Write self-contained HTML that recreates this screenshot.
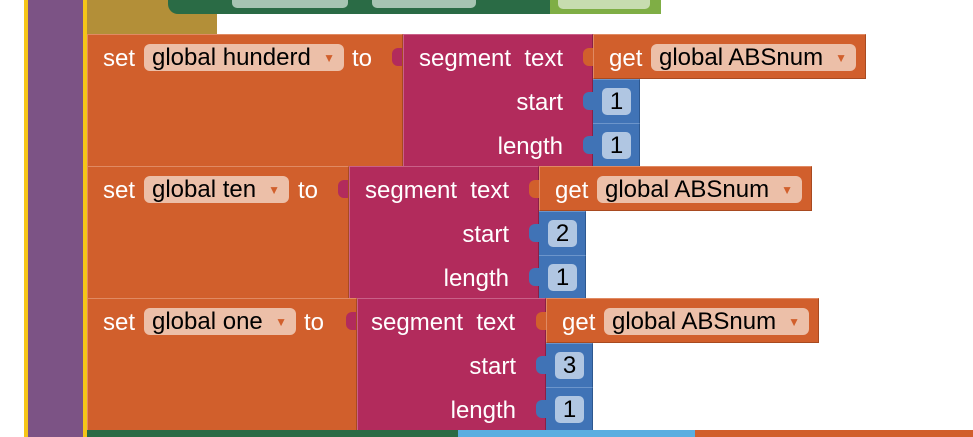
<!DOCTYPE html><html><head><style>
body{margin:0;width:973px;height:437px;overflow:hidden;background:#fff;position:relative;font-family:"Liberation Sans",Arial,sans-serif;font-size:24px}
div{position:absolute;box-sizing:border-box}
.o{background:#d15f2c;border-top:1px solid #e08a63;border-left:1px solid #e08a63;border-bottom:1px solid #a84a20;border-right:1px solid #a84a20}
.m{background:#b22b5c;border-top:1px solid #c96088;border-left:1px solid #c96088;border-right:1px solid #8a2045}
.b{background:#4073b6;border-top:1px solid #6c95cb;border-right:1px solid #2d5890}
.t{color:#fff;white-space:nowrap;line-height:26px}
.r{text-align:right;width:120px}
.p{background:#ecbfa8;border-radius:6px;color:#000;height:27px;line-height:28px;padding-left:8px;white-space:nowrap}
.p span{position:absolute;right:9px;top:0;color:#d15f2c;font-size:12px}
.n{background:#b0c6e2;border-radius:5px;color:#000;width:29px;height:27px;line-height:28px;text-align:center}
.tab{width:10px;height:18px;border-radius:6px 0 0 6px}
</style></head><body>
<div style="left:24px;top:0;width:4px;height:437px;background:#f5c518"></div>
<div style="left:28px;top:0;width:55px;height:437px;background:#7c5385"></div>
<div style="left:83px;top:0;width:4px;height:437px;background:#f5c518"></div>
<div style="left:87px;top:0;width:130px;height:34px;background:#b38f38"></div>
<div style="left:168px;top:0;width:382px;height:14px;background:#2a6b45;border-radius:0 0 0 10px"></div>
<div style="left:232px;top:0;width:116px;height:8px;background:#a6c4b2;border-radius:0 0 5px 5px"></div>
<div style="left:372px;top:0;width:104px;height:8px;background:#a6c4b2;border-radius:0 0 5px 5px"></div>
<div style="left:550px;top:0;width:111px;height:14px;background:#7fae45"></div>
<div style="left:558px;top:0;width:92px;height:9px;background:#c7dcaf;border-radius:0 0 5px 5px"></div>

<!-- block 1 -->
<div class="o" style="left:87px;top:34px;width:316px;height:133px"></div>
<div class="t" style="left:103px;top:46px">set</div>
<div class="p" style="left:144px;top:44px;width:200px">global hunderd<span>▼</span></div>
<div class="t" style="left:352px;top:46px">to</div>
<div class="m" style="left:403px;top:34px;width:190px;height:132px"></div>
<div class="m tab" style="left:392px;top:48px;border:none"></div>
<div class="t" style="left:419px;top:46px">segment&nbsp; text</div>
<div class="t r" style="left:443px;top:90px">start</div>
<div class="t r" style="left:443px;top:134px">length</div>
<div class="o" style="left:593px;top:34px;width:273px;height:45px"></div>
<div class="o tab" style="left:583px;top:48px;border:none"></div>
<div class="t" style="left:609px;top:46px">get</div>
<div class="p" style="left:651px;top:44px;width:205px">global ABSnum<span>▼</span></div>
<div class="b" style="left:593px;top:79px;width:47px;height:44px"></div>
<div class="b tab" style="left:583px;top:92px;border:none"></div>
<div class="n" style="left:602px;top:88px">1</div>
<div class="b" style="left:593px;top:123px;width:47px;height:44px"></div>
<div class="b tab" style="left:583px;top:136px;border:none"></div>
<div class="n" style="left:602px;top:132px">1</div>

<!-- block 2 -->
<div class="o" style="left:87px;top:166px;width:262px;height:133px"></div>
<div class="t" style="left:103px;top:178px">set</div>
<div class="p" style="left:144px;top:176px;width:145px">global ten<span>▼</span></div>
<div class="t" style="left:298px;top:178px">to</div>
<div class="m" style="left:349px;top:166px;width:190px;height:132px"></div>
<div class="m tab" style="left:338px;top:180px;border:none"></div>
<div class="t" style="left:365px;top:178px">segment&nbsp; text</div>
<div class="t r" style="left:389px;top:222px">start</div>
<div class="t r" style="left:389px;top:266px">length</div>
<div class="o" style="left:539px;top:166px;width:273px;height:45px"></div>
<div class="o tab" style="left:529px;top:180px;border:none"></div>
<div class="t" style="left:555px;top:178px">get</div>
<div class="p" style="left:597px;top:176px;width:205px">global ABSnum<span>▼</span></div>
<div class="b" style="left:539px;top:211px;width:47px;height:44px"></div>
<div class="b tab" style="left:529px;top:224px;border:none"></div>
<div class="n" style="left:548px;top:220px">2</div>
<div class="b" style="left:539px;top:255px;width:47px;height:44px"></div>
<div class="b tab" style="left:529px;top:268px;border:none"></div>
<div class="n" style="left:548px;top:264px">1</div>

<!-- block 3 -->
<div class="o" style="left:87px;top:298px;width:270px;height:133px"></div>
<div class="t" style="left:103px;top:310px">set</div>
<div class="p" style="left:144px;top:308px;width:152px">global one<span>▼</span></div>
<div class="t" style="left:304px;top:310px">to</div>
<div class="m" style="left:357px;top:298px;width:189px;height:132px"></div>
<div class="m tab" style="left:346px;top:312px;border:none"></div>
<div class="t" style="left:371px;top:310px">segment&nbsp; text</div>
<div class="t r" style="left:396px;top:354px">start</div>
<div class="t r" style="left:396px;top:398px">length</div>
<div class="o" style="left:546px;top:298px;width:273px;height:45px"></div>
<div class="o tab" style="left:536px;top:312px;border:none"></div>
<div class="t" style="left:562px;top:310px">get</div>
<div class="p" style="left:604px;top:308px;width:205px">global ABSnum<span>▼</span></div>
<div class="b" style="left:546px;top:343px;width:47px;height:44px"></div>
<div class="b tab" style="left:536px;top:356px;border:none"></div>
<div class="n" style="left:555px;top:352px">3</div>
<div class="b" style="left:546px;top:387px;width:47px;height:44px"></div>
<div class="b tab" style="left:536px;top:400px;border:none"></div>
<div class="n" style="left:555px;top:396px">1</div>

<div style="left:87px;top:430px;width:371px;height:7px;background:#2a6b45"></div>
<div style="left:458px;top:430px;width:237px;height:7px;background:#5aaee0"></div>
<div style="left:695px;top:430px;width:278px;height:7px;background:#d15f2c"></div>
</body></html>
